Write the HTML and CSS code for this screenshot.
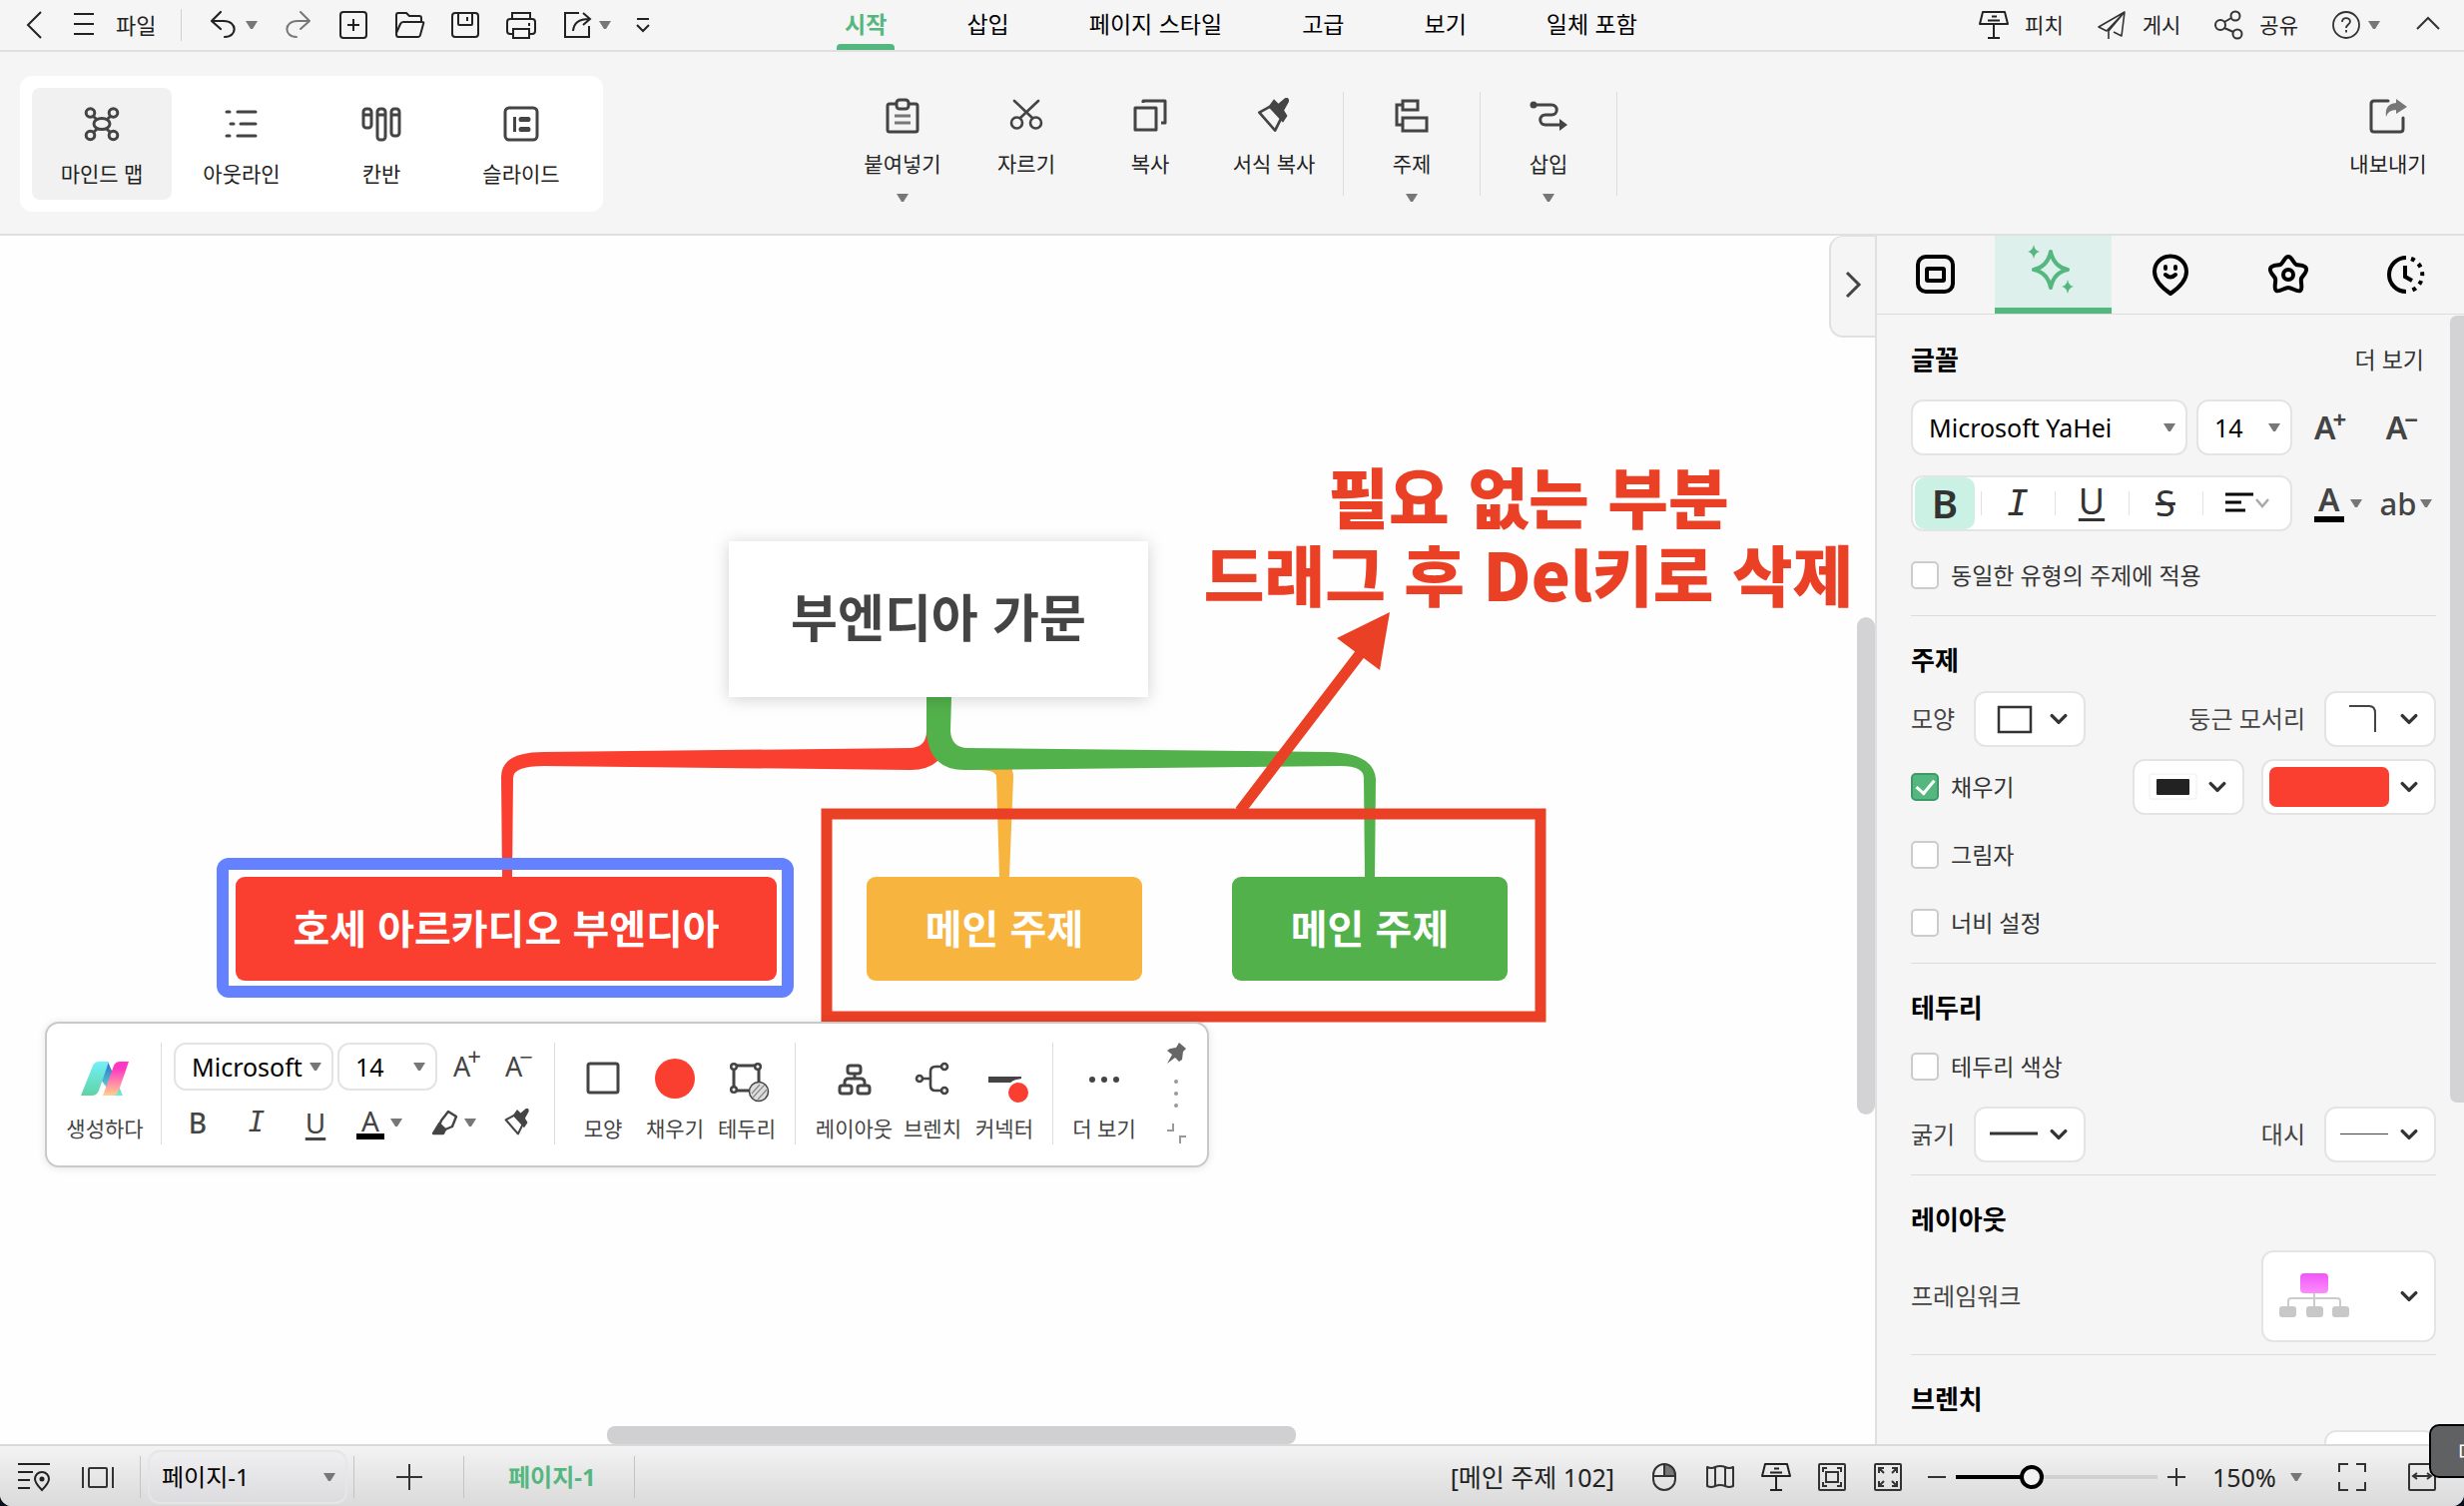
FILE: index.html
```html
<!DOCTYPE html>
<html lang="ko">
<head>
<meta charset="utf-8">
<title>부엔디아 가문</title>
<link rel="stylesheet" href="styles.css">
</head>
<body>
<svg class="defs" aria-hidden="true">
  <symbol id="caret" viewBox="0 0 12 8"><path d="M0 0h12L7 8H5z" fill="#777"/></symbol>
  <symbol id="chev" viewBox="0 0 16 10"><path d="M2 2l6 6 6-6" fill="none" stroke="#333" stroke-width="3" stroke-linecap="round" stroke-linejoin="round"/></symbol>
  <symbol id="brush" viewBox="0 0 32 32"><path d="M3 13l11-6 9 10-6 12z" fill="none" stroke="#444" stroke-width="2.4" stroke-linejoin="round"/><path d="M11 8l5-7 4 4 6-5c3-1 4 2 3 4l-4 7 3 5-4 6z" fill="#444"/></symbol>
  <symbol id="podium" viewBox="0 0 32 32"><path d="M5 3h22l3 12H2zM16 15v14M10 29h12M14 7.500h5M10 11.500h12" fill="none" stroke="#222" stroke-width="2" stroke-linejoin="round"/></symbol>
</svg>

<div class="app">
  <header class="topbar">
    <div class="quick">
      <button class="ico" aria-label="뒤로"><svg width="32" height="32" fill="none" stroke="#222" stroke-width="2"><path d="M23 3L10 16l13 13"/></svg></button>
      <button class="file"><svg width="32" height="32" fill="none" stroke="#222" stroke-width="2"><path d="M6 5h20M6 15h20M6 25h20"/></svg><span>파일</span></button>
      <i class="rule"></i>
      <div class="quick-tools">
        <button class="drop undo" aria-label="실행 취소"><svg width="32" height="32" fill="none" stroke="#222" stroke-width="2.200" stroke-linecap="round" stroke-linejoin="round"><path d="M14 3l-9 9 9 8M5 12h12c14 0 14 16 1 16"/></svg><svg class="caret"><use href="#caret"/></svg></button>
        <button class="ico" aria-label="다시 실행"><svg width="32" height="32" fill="none" stroke="#777" stroke-width="2" stroke-linecap="round" stroke-linejoin="round"><path d="M19 3l9 9-9 8M28 12H16c-14 0-14 16-1 16"/></svg></button>
        <button class="ico" aria-label="새로 만들기"><svg width="32" height="32" fill="none" stroke="#222" stroke-width="2"><rect x="3" y="3" width="26" height="26" rx="3"/><path d="M16 10v12M10 16h12"/></svg></button>
        <button class="ico" aria-label="열기"><svg width="32" height="32" fill="none" stroke="#222" stroke-width="2" stroke-linejoin="round"><path d="M3 24V6q0-2 2-2h8l3 3h10q2 0 2 2v4M3 24l4-9q1-2 3-2h19q2 0 1 2l-3 11q-.5 2-2 2H5q-2 0-2-3z"/></svg></button>
        <button class="ico" aria-label="저장"><svg width="32" height="32" fill="none" stroke="#222" stroke-width="2"><rect x="3" y="4" width="26" height="24" rx="3"/><path d="M9 4v11q0 1 1 1h12q1 0 1-1V4M18 8v4"/></svg></button>
        <button class="ico" aria-label="인쇄"><svg width="32" height="32" fill="none" stroke="#222" stroke-width="2"><path d="M7 10V4h18v6M7 25H5q-3 0-3-3v-9q0-3 3-3h22q3 0 3 3v9q0 3-3 3h-2M8 20h16v9H8zM24 14v3"/></svg></button>
        <button class="drop" aria-label="내보내기"><svg width="32" height="32" fill="none" stroke="#222" stroke-width="2"><path d="M18 4H4v24h24V17M12 22q1-12 16-12M22 4l7 6-7 6"/></svg><svg class="caret"><use href="#caret"/></svg></button>
        <button class="ico narrow" aria-label="사용자 지정"><svg width="16" height="20" fill="none" stroke="#222" stroke-width="2"><path d="M2 4h12M2 10l6 6 6-6"/></svg></button>
      </div>
    </div>
    <nav class="tabs">
      <a class="on" href="#home">시작</a><a href="#insert">삽입</a><a href="#style">페이지 스타일</a><a href="#adv">고급</a><a href="#view">보기</a><a href="#all">일체 포함</a>
    </nav>
    <div class="share">
      <button class="pair"><svg width="32" height="32"><use href="#podium"/></svg>피치</button>
      <button class="pair"><svg width="32" height="32" fill="none" stroke="#333" stroke-width="1.600" stroke-linejoin="round"><path d="M29 3L3 18l8 4zM29 3l-3 24-8-4M29 3L13 22v8"/></svg>게시</button>
      <button class="pair"><svg width="32" height="32" fill="none" stroke="#333" stroke-width="2"><circle cx="8" cy="16" r="5"/><circle cx="23" cy="7" r="4.500"/><circle cx="25" cy="25" r="4.500"/><path d="M12 13l7-4M12 19l9 4"/></svg>공유</button>
      <button class="drop" aria-label="도움말"><svg width="32" height="32" fill="none" stroke="#333" stroke-width="1.800"><circle cx="16" cy="16" r="13"/><path d="M12 13c0-5 8-5 8-.5 0 3-4 3-4 6.500M16 21v2.500"/></svg><svg class="caret"><use href="#caret"/></svg></button>
      <button class="ico" aria-label="리본 접기"><svg width="32" height="32" fill="none" stroke="#333" stroke-width="2"><path d="M5 20l11-11 11 11"/></svg></button>
    </div>
  </header>

  <section class="ribbon">
    <div class="modes">
      <button class="on"><svg width="36" height="36" fill="none" stroke="#444" stroke-width="3"><path d="M9 10l18 17M27 10L9 27"/><g fill="#f1f1f1"><circle cx="6.500" cy="7" r="4.300"/><circle cx="29.500" cy="7" r="4.300"/><circle cx="6.500" cy="29.500" r="4.300"/><circle cx="29.500" cy="29.500" r="4.300"/><ellipse cx="18" cy="18" rx="8" ry="5.500"/></g></svg>마인드 맵</button>
      <button><svg width="36" height="36" fill="none" stroke="#444" stroke-width="3" stroke-linecap="round"><path d="M3 6h3M14 6h18M7 18h3M17 18h15M3 30h3M14 30h18"/></svg>아웃라인</button>
      <button><svg width="44" height="36" fill="none" stroke="#444" stroke-width="3"><rect x="4" y="3" width="8" height="19" rx="3"/><rect x="18" y="3" width="8" height="31" rx="3"/><rect x="32" y="3" width="8" height="27" rx="3"/><path d="M4 9h8M18 9h8M32 9h8"/></svg>칸반</button>
      <button><svg width="36" height="36" fill="none" stroke="#444" stroke-width="3"><rect x="2" y="2" width="32" height="32" rx="4"/><path d="M11.500 11v15"/><path d="M17 11h9v5h-9zM17 21h9v5h-9z" fill="#444" stroke="none"/><path d="M18 13.500h7M18 23.500h7" stroke-width="5" stroke-linecap="round"/></svg>슬라이드</button>
    </div>
    <div class="tools">
      <button><svg width="36" height="36" fill="none" stroke="#444" stroke-width="3"><path d="M12 6H5q-2 0-2 2v24q0 2 2 2h26q2 0 2-2V8q0-2-2-2h-7"/><rect x="12" y="2" width="12" height="9" rx="3"/><path d="M10 18h16M10 25h16" stroke="#777"/></svg>붙여넣기<svg class="caret"><use href="#caret"/></svg></button>
      <button><svg width="36" height="36" fill="none" stroke="#444" stroke-width="2.600" stroke-linecap="round"><circle cx="8.500" cy="25" r="5.500"/><circle cx="27.500" cy="25" r="5.500"/><path d="M6 3l18 17M30 3L12 20"/></svg>자르기</button>
      <button><svg width="36" height="36" fill="none" stroke="#444" stroke-width="3" stroke-linejoin="round"><rect x="3" y="10" width="21" height="22"/><path d="M11 5V3h22v22h-4"/></svg>복사</button>
      <button><svg width="36" height="36"><use href="#brush"/></svg>서식 복사</button>
      <div class="cell"><button><svg width="36" height="36" fill="none" stroke="#444" stroke-width="3"><path d="M9 3h15v9H9zM9 20h24v13H9zM9 7H3v20h6"/></svg>주제<svg class="caret"><use href="#caret"/></svg></button></div>
      <div class="cell"><button><svg width="40" height="36" fill="none" stroke="#444" stroke-width="3"><circle cx="5" cy="7" r="3.500" fill="#444" stroke="none"/><path d="M5 7h18c7 0 7 10 0 10h-6c-7 0-7 10 0 10h14"/><path d="M31 21l8 6-8 6z" fill="#444" stroke="none"/></svg>삽입<svg class="caret"><use href="#caret"/></svg></button></div>
    </div>
    <div class="export">
      <button><svg width="40" height="36" fill="none" stroke="#444" stroke-width="3" stroke-linecap="round"><path d="M20 3H6Q3 3 3 6v25q0 3 3 3h26q3 0 3-3V20"/><path d="M28 1l11 8-11 7v-4q-8 0-10 7-2-13 10-14z" fill="#777" stroke="none"/></svg>내보내기</button>
    </div>
  </section>

  <main class="work">
    <section class="canvas">
      <svg class="links" width="1878" height="1210" viewBox="0 236 1878 1210">
        <path fill="#fa3e2f" d="M503 878L502 778Q502 753 545 753L912 749Q928 748 928 732V698H952V732Q948 771 912 771L545 767Q514 767 514 779L513 878z"/>
        <path fill="#f7b43f" d="M958 758L1004 765Q1015 765 1015 778L1011 878H1001L998 778Q998 771 980 771L960 769z"/>
        <path fill="#52b14b" d="M928 698H953L952 732Q953 748 968 749L1330 753Q1376 754 1378 780L1377 878H1367L1366 779Q1366 767 1343 767L970 771Q930 773 928 732z"/>
      </svg>
      <div class="node root">부엔디아 가문</div>
      <div class="pick"></div>
      <div class="node red">호세 아르카디오 부엔디아</div>
      <div class="node yellow">메인 주제</div>
      <div class="node green">메인 주제</div>
      <svg class="links" width="1878" height="1210" viewBox="0 236 1878 1210">
        <rect x="828" y="815" width="715" height="203" fill="none" stroke="#ea4025" stroke-width="11"/>
        <path d="M1242 812L1362 655" stroke="#ea4025" stroke-width="11"/>
        <path d="M1392 613L1339 639L1382 671z" fill="#ea4025"/>
      </svg>
      <p class="note">필요 없는 부분<br>드래그 후 Del키로 삭제</p>

      <div class="float">
        <button class="tool ai"><svg width="50" height="36"><defs><linearGradient id="g1" x1="0" y1="0" x2="0" y2="1"><stop offset="0" stop-color="#72f0fa"/><stop offset="1" stop-color="#5fd3a4"/></linearGradient><linearGradient id="g2" x1="0" y1="0" x2="0" y2="1"><stop offset=".2" stop-color="#ff36c4"/><stop offset="1" stop-color="#ffd28e"/></linearGradient><linearGradient id="g3" x1="0" y1="0" x2="0" y2="1"><stop offset="0" stop-color="#2c68c8"/><stop offset="1" stop-color="#6df0d8"/></linearGradient></defs><path fill="url(#g3)" d="M28 1l15 34H33L20 18z"/><path fill="url(#g1)" d="M13 5q2-4 6-4h10L19 30q-2 5-7 5H1z"/><path fill="url(#g2)" d="M34 5q2-4 6-4h9L39 30q-2 5-7 5h-9z"/></svg>생성하다</button>
        <div class="group text">
          <div class="line">
            <span class="pickbox w160"><select aria-label="글꼴"><option>Microsoft</option></select><svg class="caret"><use href="#caret"/></svg></span>
            <span class="pickbox w100"><select aria-label="크기"><option>14</option></select><svg class="caret"><use href="#caret"/></svg></span>
            <button class="grow thin">A<sup>+</sup></button><button class="grow thin">A<sup>−</sup></button>
          </div>
          <div class="line marks">
            <button class="b">B</button><button class="i">I</button><button class="u">U</button>
            <button class="drop color"><span>A</span><svg class="caret"><use href="#caret"/></svg></button>
            <button class="drop" aria-label="강조"><svg width="26" height="28" fill="none" stroke="#444" stroke-width="2.400" stroke-linejoin="round"><path d="M9 12l7-9 8 5-4 10-7 3-6-4z"/><path d="M7 15l6 6-2 4H1z" fill="#444"/></svg><svg class="caret"><use href="#caret"/></svg></button>
            <button aria-label="서식 복사"><svg width="28" height="28"><use href="#brush"/></svg></button>
          </div>
        </div>
        <div class="group">
          <button class="tool"><svg width="40" height="40" fill="none" stroke="#444" stroke-width="3"><rect x="5" y="5" width="30" height="29" rx="2"/></svg>모양</button>
          <button class="tool"><svg width="40" height="40"><circle cx="20" cy="20" r="20" fill="#fa3e2f"/></svg>채우기</button>
          <button class="tool"><svg class="bleed" width="40" height="40" fill="none" stroke="#444" stroke-width="3"><rect x="7" y="7" width="25" height="25"/><g fill="#fff" stroke-width="2.500"><circle cx="7" cy="8" r="2.800"/><circle cx="31" cy="8" r="2.800"/><circle cx="7" cy="31" r="2.800"/></g><circle cx="32" cy="33" r="9.500" fill="#ddd" stroke-width="1.500"/><path d="M25 35l8-9M26 39l12-13M31 41l9-10" stroke="#888" stroke-width="1.200"/></svg>테두리</button>
        </div>
        <div class="group">
          <button class="tool wide"><svg width="40" height="40" fill="none" stroke="#444" stroke-width="3"><rect x="13" y="7" width="13" height="8" rx="2.500"/><rect x="5" y="27" width="12" height="8" rx="2.500"/><rect x="23" y="27" width="12" height="8" rx="2.500"/><path d="M20 15v5M10 27v-3q0-4 4-4h12q4 0 4 4v3"/></svg>레이아웃</button>
          <button class="tool"><svg width="40" height="40" fill="none" stroke="#444" stroke-width="2.600"><path d="M10 20h8M29 8h-6q-5 0-5 5v14q0 5 5 5h6"/><g fill="#fff"><circle cx="7" cy="20" r="3"/><circle cx="32" cy="8" r="3"/><circle cx="32" cy="32" r="3"/></g></svg>브렌치</button>
          <button class="tool"><svg class="bleed" width="40" height="40"><path d="M4 18h33v2q-6 0-11 4H4z" fill="#444"/><circle cx="34" cy="34" r="13" fill="#fff"/><path d="M4 18h33v2q-6 0-11 4H4z" fill="#444"/><circle cx="34" cy="34" r="10" fill="#fa3e2f"/></svg>커넥터</button>
        </div>
        <div class="group last">
          <button class="tool"><svg width="40" height="40" fill="#444"><circle cx="8" cy="21" r="3"/><circle cx="20" cy="21" r="3"/><circle cx="32" cy="21" r="3"/></svg>더 보기</button>
        </div>
        <button class="pin" aria-label="고정"><svg width="22" height="104" fill="#666"><path d="M14 1l7 6-3 3-1 8-3 2-4-4-8 6 5-9-5-4 3-2 6-1z"/><g fill="#999"><circle cx="11" cy="40" r="2"/><circle cx="11" cy="52" r="2"/><circle cx="11" cy="64" r="2"/></g><path d="M2 89h6v-7M21 95h-6v7" fill="none" stroke="#999" stroke-width="2"/></svg></button>
      </div>

      <button class="handle" aria-label="패널 접기"><svg width="18" height="30" fill="none" stroke="#444" stroke-width="3"><path d="M3 3l12 12L3 27"/></svg></button>
      <div class="vbar"></div>
      <div class="hbar"></div>
    </section>

    <aside class="side">
      <nav class="side-tabs">
        <button aria-label="도형"><svg width="42" height="42" fill="none" stroke="#000" stroke-width="4"><rect x="3" y="3" width="35" height="35" rx="8"/><rect x="12" y="15" width="17" height="12" rx="1"/></svg></button>
        <button class="on" aria-label="스타일"><svg width="52" height="52" fill="none" stroke="#55b780" stroke-width="4" stroke-linejoin="round"><path d="M26 8q3 15 17 18-14 3-17 18-3-15-17-18 14-3 17-18z"/><path d="M9 1q1 6 6 7-5 1-6 7-1-6-6-7 5-1 6-7zM43 36q1 6 6 7-5 1-6 7-1-6-6-7 5-1 6-7z" fill="#55b780" stroke="none"/></svg></button>
        <button aria-label="아이콘"><svg width="42" height="42" fill="none" stroke="#000" stroke-width="4" stroke-linecap="round" stroke-linejoin="round"><path d="M21 40Q5 29 5 18a16 15.500 0 0 1 32 0q0 11-16 22zM16 13v2M26 13v2M16 21q5 5 10 0"/></svg></button>
        <button aria-label="테마"><svg width="42" height="42" fill="none" stroke="#000" stroke-width="4" stroke-linejoin="round"><path d="M21 3c4 0 5 7 8 8s9 0 10 4-4 7-5 10 2 10-1 12-8-3-12-3-9 5-12 3 0-9-1-12-6-6-5-10 7-3 10-4 4-8 8-8z"/><circle cx="21" cy="21" r="5"/></svg></button>
        <button aria-label="기록"><svg width="42" height="42" fill="none" stroke="#000" stroke-width="4"><path d="M22 4a17 17 0 0 0 0 34M21 12v11l7 4"/><path d="M27 5a17 17 0 0 1 0 32" stroke-dasharray="4 5"/></svg></button>
      </nav>
      <div class="props">
        <section class="first">
          <h2>글꼴 <a href="#more">더 보기</a></h2>
          <div class="fontrow">
            <span class="pickbox fam"><select aria-label="글꼴 이름"><option>Microsoft YaHei</option></select><svg class="caret"><use href="#caret"/></svg></span>
            <span class="pickbox num"><select aria-label="글꼴 크기"><option>14</option></select><svg class="caret"><use href="#caret"/></svg></span>
            <button class="grow">A<sup>+</sup></button><button class="grow">A<sup>−</sup></button>
          </div>
          <div class="fontrow">
            <div class="format">
              <button class="b on">B</button><button class="i">I</button><button class="u">U</button><button class="s">S</button>
              <button class="al" aria-label="정렬"><svg width="30" height="24" stroke="#000" stroke-width="3"><path d="M0 3h28M0 11h16M0 19h20"/></svg><svg width="14" height="10" fill="none" stroke="#aaa" stroke-width="2.500"><path d="M1 1l6 7 6-7"/></svg></button>
            </div>
            <button class="drop color heavy"><span>A</span><svg class="caret"><use href="#caret"/></svg></button>
            <button class="drop ab">ab<svg class="caret"><use href="#caret"/></svg></button>
          </div>
          <label class="check"><input type="checkbox">동일한 유형의 주제에 적용</label>
        </section>
        <section>
          <h2>주제</h2>
          <div class="row"><span>모양</span><button class="box" aria-label="모양"><svg width="52" height="32" fill="none" stroke="#333" stroke-width="2.500"><rect x="11" y="4" width="32" height="25"/></svg><svg class="chev"><use href="#chev"/></svg></button>
            <span class="push">둥근 모서리</span><button class="box" aria-label="둥근 모서리"><svg width="52" height="32" fill="none" stroke="#444" stroke-width="2"><path d="M11 3h20q6 0 6 7v19"/></svg><svg class="chev"><use href="#chev"/></svg></button></div>
          <div class="row"><label class="check"><input type="checkbox" checked>채우기</label>
            <button class="box push" aria-label="채우기 유형"><svg width="52" height="32"><rect x="3" y="3" width="47" height="25" rx="2" fill="#fff" stroke="#eee"/><rect x="10" y="8" width="33" height="16" rx="1" fill="#222"/></svg><svg class="chev"><use href="#chev"/></svg></button>
            <button class="box long" aria-label="채우기 색"><i class="swatch"></i><svg class="chev"><use href="#chev"/></svg></button></div>
          <div class="row"><label class="check"><input type="checkbox">그림자</label></div>
          <div class="row"><label class="check"><input type="checkbox">너비 설정</label></div>
        </section>
        <section>
          <h2>테두리</h2>
          <div class="row"><label class="check"><input type="checkbox">테두리 색상</label></div>
          <div class="row"><span>굵기</span><button class="box" aria-label="굵기"><svg width="52" height="32"><path d="M2 15h48" stroke="#333" stroke-width="3"/></svg><svg class="chev"><use href="#chev"/></svg></button>
            <span class="push">대시</span><button class="box" aria-label="대시"><svg width="52" height="32"><path d="M2 15.500h48" stroke="#444" stroke-width="1"/></svg><svg class="chev"><use href="#chev"/></svg></button></div>
        </section>
        <section>
          <h2>레이아웃</h2>
          <div class="row tall"><span>프레임워크</span><button class="box long push" aria-label="프레임워크"><svg width="74" height="50"><defs><linearGradient id="pk" x1="0" y1="0" x2="0" y2="1"><stop offset="0" stop-color="#f055f8"/><stop offset="1" stop-color="#fb8dfb"/></linearGradient></defs><path d="M37 22v14M11 36v-6q0-3 3-3h46q3 0 3 3v6" fill="none" stroke="#ccc" stroke-width="2"/><rect x="23" y="2" width="28" height="20" rx="4" fill="url(#pk)"/><g fill="#c8c8c8"><rect x="2" y="35" width="17" height="11" rx="3"/><rect x="29" y="35" width="17" height="11" rx="3"/><rect x="55" y="35" width="17" height="11" rx="3"/></g></svg><svg class="chev"><use href="#chev"/></svg></button></div>
        </section>
        <section>
          <h2>브렌치</h2>
          <div class="row"><button class="box push" aria-label="브렌치 스타일"></button></div>
        </section>
      </div>
      <div class="sbar"></div>
    </aside>
  </main>

  <footer class="status">
    <button class="ico" aria-label="개요"><svg width="32" height="32" fill="none" stroke="#222" stroke-width="2"><path d="M0 3h32M0 11h15M0 19h12M0 27h12"/><path d="M24 29q-7-7-7-11a7 7 0 0 1 14 0q0 4-7 11z"/><circle cx="24" cy="18" r="1.500" fill="#222"/></svg></button>
    <button class="ico gap" aria-label="프레임"><svg width="32" height="32" fill="none" stroke="#333" stroke-width="2"><rect x="7" y="7" width="18" height="19" rx="1"/><path d="M1 6v21M31 6v21"/></svg></button>
    <i class="rule r1"></i>
    <span class="pickbox page"><select aria-label="페이지"><option>페이지-1</option></select><svg class="caret"><use href="#caret"/></svg></span>
    <i class="rule"></i>
    <button class="add" aria-label="페이지 추가"><svg width="28" height="28" stroke="#333" stroke-width="2"><path d="M14 1v26M1 14h26"/></svg></button>
    <i class="rule"></i>
    <a class="current" href="#p1">페이지-1</a>
    <i class="rule"></i>
    <div class="right">
      <span class="where">[메인 주제 102]</span>
      <div class="views">
        <button aria-label="마우스"><svg width="28" height="32" fill="none" stroke="#333" stroke-width="2"><path d="M14 3a11 11 0 0 1 11 11v1H14z" fill="#777" stroke="none" /><rect x="3" y="3" width="22" height="26" rx="11"/><path d="M3 15h22M14 3v12"/></svg></button>
        <button aria-label="지도"><svg width="28" height="32" fill="none" stroke="#333" stroke-width="2" stroke-linejoin="round"><path d="M1 6q4 2 8 0 5-2 10 0 4 2 8 0v19q-4 2-8 0-5-2-10 0-4 2-8 0zM9 6v19M19 6v19"/></svg></button>
        <button aria-label="발표"><svg width="32" height="32"><use href="#podium"/></svg></button>
        <button aria-label="맞춤"><svg width="28" height="32" fill="none" stroke="#333" stroke-width="2"><rect x="1" y="3" width="26" height="26" rx="1"/><rect x="8" y="11" width="12" height="10"/><path d="M5 11V7h4M19 7h4v4M5 21v4h4M19 25h4v-4"/></svg></button>
        <button aria-label="펼치기"><svg width="28" height="32" fill="none" stroke="#333" stroke-width="2"><rect x="1" y="3" width="26" height="26" rx="1"/><path d="M5 12V7h5M5 7l5 5M18 7h5v5M23 7l-5 5M5 20v5h5M5 25l5-5M18 25h5v-5M23 25l-5-5"/></svg></button>
      </div>
      <div class="zoom">
        <button aria-label="축소"><svg width="18" height="18" stroke="#333" stroke-width="2"><path d="M0 9h18"/></svg></button>
        <input type="range" min="0" max="100" value="36" aria-label="확대/축소">
        <button aria-label="확대"><svg width="18" height="18" stroke="#333" stroke-width="2"><path d="M9 0v18M0 9h18"/></svg></button>
      </div>
      <button class="drop pct">150%<svg class="caret"><use href="#caret"/></svg></button>
      <button class="full" aria-label="전체 화면"><svg width="28" height="28" fill="none" stroke="#333" stroke-width="2"><path d="M1 9V1h9M18 1h9v8M1 19v8h9M18 27h9v-8"/></svg></button>
      <button aria-label="너비 맞춤"><svg width="28" height="28" fill="none" stroke="#333" stroke-width="2"><rect x="1" y="1" width="26" height="26" rx="1"/><path d="M5 13h18M9 10l-4 3 4 3M19 10l4 3-4 3"/></svg></button>
    </div>
  </footer>
  <div class="tip">다</div>
</div>
</body>
</html>
```
FILE: styles.css
```css
* { box-sizing: border-box; }
body {
  margin: 0;
  background: #0a0f1c;
  color: #222;
  font: 21px/28px "Noto Sans", "Noto Sans CJK KR", sans-serif;
}
button, select, input { font: inherit; color: inherit; margin: 0; }
button { padding: 0; border: 0; background: none; display: flex; align-items: center; justify-content: center; white-space: nowrap; }
a { color: inherit; text-decoration: none; }
svg { display: block; flex: none; }
.defs { position: absolute; width: 0; height: 0; }
.caret { width: 12px; height: 8px; }
.chev { width: 18px; height: 12px; }
.rule { flex: none; width: 1px; background: #d0d0d0; }

.app { position: relative; height: 100vh; display: flex; flex-direction: column; overflow: hidden; background: #f5f5f5; border-radius: 0 0 12px 12px; }

/* top bar */
.topbar { flex: none; height: 52px; display: grid; grid-template-columns: 1fr auto 1fr; padding-left: 18px; border-bottom: 2px solid #e0e0e0; }
.quick, .quick-tools, .share, .tabs { display: flex; align-items: center; }
.topbar { padding-bottom: 1px; }
.quick { gap: 18px; }
.quick .rule { height: 32px; margin: 0 7px; }
.quick-tools { gap: 24px; }
.file { gap: 16px; font-size: 22px; }
.drop { gap: 6px; }
.undo { gap: 7px; }
.tabs { font-family: "Noto Sans CJK KR", sans-serif; font-size: 23px; color: #000; }
.tabs a { position: relative; height: 49px; padding: 9px 40px; }
.tabs .on { color: #55b780; font-weight: 700; }
.tabs .on::after { content: ""; position: absolute; left: 32px; right: 32px; bottom: -1px; height: 6px; border-radius: 4px 4px 0 0; background: #55b780; }
.share { justify-content: flex-end; gap: 32px; padding-right: 20px; }
.pair { gap: 15px; }

/* ribbon */
.ribbon { flex: none; height: 184px; display: grid; grid-template-columns: 1fr auto 1fr; padding: 24px 26px 0 20px; border-bottom: 2px solid #e0e0e0; }
.ribbon button { flex-direction: column; justify-content: flex-start; }
.modes { justify-self: start; height: 136px; display: flex; padding: 12px; border-radius: 12px; background: #fff; }
.modes button { width: 140px; height: 112px; padding-top: 18px; gap: 18px; border-radius: 8px; }
.modes .on { background: #f1f1f1; }
.tools { display: flex; }
.tools button { width: 124px; padding-top: 22px; gap: 16px; }
.tools .cell { height: 104px; margin-top: 16px; padding: 0 6px; border-right: 1px solid #dcdcdc; }
.tools .cell:nth-child(5) { margin-left: 7px; border-left: 1px solid #dcdcdc; }
.tools .cell button { padding-top: 6px; }
.export { display: flex; justify-content: flex-end; }
.export button { width: 100px; padding-top: 22px; gap: 16px; }

/* workspace */
.work { flex: 1; min-height: 0; display: flex; }
.canvas { position: relative; flex: 1; min-width: 0; overflow: hidden; background: #fefefe; }
.links { position: absolute; left: 0; top: 0; }
.node { position: absolute; display: flex; align-items: center; justify-content: center; font-family: "Noto Sans CJK KR", sans-serif; font-weight: 700; white-space: nowrap; }
.node.red, .node.yellow, .node.green { top: 642px; height: 104px; border-radius: 9px; color: #fff; font-size: 40px; line-height: 56px; padding-bottom: 4px; }
.node.red { left: 236px; width: 542px; background: #fa3e2f; }
.node.yellow { left: 868px; width: 276px; background: #f7b43f; }
.node.green { left: 1234px; width: 276px; background: #52b14b; }
.node.root { left: 730px; top: 306px; width: 420px; height: 156px; padding-bottom: 8px; background: #fff; color: #444; font-size: 51px; line-height: 64px; box-shadow: 0 2px 16px rgba(0, 0, 0, .18); }
.pick { position: absolute; left: 217px; top: 623px; width: 578px; height: 140px; border: 12px solid #6481ff; border-radius: 12px; }
.note { position: absolute; left: 1181px; top: 220px; width: 700px; margin: 0; color: #ea4025; font-family: "Noto Sans CJK KR", sans-serif; font-size: 66px; line-height: 78px; font-weight: 900; text-align: center; white-space: nowrap; }
.vbar { position: absolute; right: 0; top: 382px; width: 18px; height: 498px; border-radius: 9px; background: #d3d3d6; }
.hbar { position: absolute; left: 608px; bottom: 0; width: 690px; height: 18px; border-radius: 8px; background: #d0d0d2; }
.handle { position: absolute; right: 0; top: 0; width: 46px; height: 102px; border: 2px solid #e0e0e0; border-width: 1px 0 2px 2px; border-radius: 14px 0 0 14px; background: #f5f5f5; padding-bottom: 4px; }

/* floating toolbar */
.float { position: absolute; left: 45px; top: 787px; width: 1166px; height: 146px; display: flex; padding: 19px 20px 21px 10px; border: 2px solid #c9c9c9; border-radius: 14px; background: #fff; color: #444; box-shadow: 0 1px 8px rgba(0, 0, 0, .1); }
.group { display: flex; padding: 0 12px; border-left: 1px solid #dcdcdc; }
.group.last { padding: 0 15px; }
.tool { flex-direction: column; justify-content: flex-start; width: 72px; padding-top: 16px; gap: 16px; }
.tool.wide { width: 89px; padding-left: 4px; }
.tool.ai { width: 106px; padding: 18px 8px 0 0; gap: 18px; }
.bleed { overflow: visible; }
.group.text { flex-direction: column; gap: 14px; width: 394px; }
.line { display: flex; align-items: center; }
.line > * { flex: none; }
.pickbox { position: relative; display: flex; height: 56px; border: 2px solid #e4e4e4; border-radius: 12px; background: #fff; color: #000; }
.pickbox select { appearance: none; width: 100%; padding: 0 16px; border: 0; background: none; font-size: 25px; line-height: 32px; }
.pickbox .caret { position: absolute; right: 10px; top: 50%; margin-top: -4px; pointer-events: none; }
.line .pickbox { height: 48px; margin-right: 4px; }
.line .pickbox select { padding-right: 0; }
.w160 { width: 160px; }
.w100 { width: 100px; }
.grow { width: 32px; font-size: 32px; line-height: 32px; font-weight: 600; color: #444; }
.grow sup { align-self: flex-start; margin: -4px 0 0 -3px; font-size: 24px; line-height: 24px; font-weight: 700; }
.grow.thin { width: 52px; font-size: 27px; font-weight: 400; }
.grow.thin sup { margin-top: -6px; font-weight: 400; }
.marks { font-size: 28px; line-height: 36px; padding-left: 11px; }
.marks > * { width: 26px; margin-right: 33px; height: 36px; }
.marks .drop { width: 48px; }
.marks .color { margin-left: -6px; margin-right: 27px; }
.marks > :nth-child(5) { margin-right: 26px; }
.marks > :last-child { margin-right: 0; }
.b { font-weight: 500; }
.i { font-family: "DejaVu Sans Mono", monospace; font-style: italic; }
.u { text-decoration: underline; text-decoration-thickness: 3px; text-underline-offset: 4px; }
.s { text-decoration: line-through; text-decoration-thickness: 3px; }
.color span { display: block; height: 34px; padding: 0 5px; line-height: 30px; border-bottom: 6px solid #000; }
.pin { margin-left: 10px; }

/* side panel */
.side { position: relative; flex: none; width: 590px; display: flex; flex-direction: column; border-left: 2px solid #e0e0e0; background: #f5f5f5; overflow: hidden; }
.side-tabs { flex: none; display: flex; height: 79px; border-bottom: 1px solid #dcdcdc; }
.side-tabs button { width: 20%; }
.side-tabs .on { background: #def0eb; border-bottom: 6px solid #55b780; padding: 0 4px 4px 0; }
.props { padding: 0 28px 0 34px; }
.props section { padding: 28px 0 12px; border-bottom: 1px solid #dcdcdc; display: flex; flex-direction: column; gap: 12px; }
.props section.first { padding: 29px 0 26px; gap: 20px; }
.props h2 { display: flex; justify-content: space-between; margin: 0 12px 3px 0; font-size: 26px; line-height: 32px; font-weight: 700; color: #000; }
.props .first h2 { margin-bottom: 4px; }
.props h2 a { font-size: 23px; font-weight: 400; color: #333; }
.fontrow { display: flex; align-items: center; height: 56px; }
.fam { width: 277px; margin-right: 9px; }
.num { width: 96px; margin-right: 22px; }
.fontrow .grow { margin-right: 40px; }
.fontrow .grow:last-child { margin-right: 0; }
.format { display: flex; align-items: center; width: 382px; height: 56px; margin-right: 22px; padding: 0 2px; border: 2px solid #e4e4e4; border-radius: 12px; background: #fff; font-size: 36px; line-height: 40px; color: #333; }
.format button { position: relative; width: 74px; height: 52px; }
.format .u { padding-bottom: 4px; }
.format button + button::before { content: ""; position: absolute; left: 0; top: 14px; width: 1px; height: 24px; background: #e2e2e2; }
.format .b { width: 60px; margin-right: 6px; border-radius: 10px; background: #cbf0e4; font-size: 40px; font-weight: 600; }
.format .al { flex: 1; padding-left: 4px; }
.color.heavy { font-size: 32px; font-weight: 600; color: #444; }
.color.heavy span { padding: 0 4px; height: 38px; }
.ab { margin-left: 18px; gap: 4px; font-size: 31px; font-weight: 500; color: #444; }
.check { display: flex; align-items: center; gap: 12px; height: 28px; font-size: 23px; color: #333; }
.first .check { margin-top: 10px; }
.check input { appearance: none; width: 28px; height: 28px; border: 2px solid #ccc; border-radius: 5px; background: #fff; }
.check input:checked { border-color: #3f9868; background: #55b780; display: grid; place-items: center; }
.check input:checked::after { content: ""; width: 8px; height: 15px; margin-top: -4px; border: solid #fff; border-width: 0 3px 3px 0; transform: rotate(40deg); }
.row { display: flex; align-items: center; height: 56px; gap: 19px; font-size: 24px; color: #444; }
.row.tall { height: 92px; }
.push { margin-left: auto; }
.box { width: 112px; height: 100%; padding: 0 16px 0 12px; justify-content: space-between; border: 2px solid #e4e4e4; border-radius: 12px; background: #fff; }
.box.long { width: 175px; padding-left: 6px; }
.box + .box { margin-left: -2px; }
.tall .box.long { padding-left: 14px; }
.swatch { width: 120px; height: 40px; border-radius: 7px; background: #fa3e2f; }
.sbar { position: absolute; right: 0; top: 80px; width: 14px; height: 788px; border-radius: 7px 0 0 7px; background: #d3d3d6; }

/* status bar */
.status { flex: none; height: 62px; display: flex; align-items: center; padding: 2px 28px 0 18px; border-top: 2px solid #d9d9d9; background: linear-gradient(#f3f3f3, #dadada); }
.status .rule { height: 42px; background: #c4c4c4; }
.gap { margin-left: 32px; }
.r1 { margin: 0 7px 0 26px; }
.page { width: 200px; height: 54px; margin-right: 6px; border-color: #e6e6e6; background: linear-gradient(#efeff1, #dcdcdf); }
.page select { padding-left: 12px; font-size: 24px; }
.add { width: 109px; }
.current { padding: 0 38px 0 44px; font-size: 24px; font-weight: 700; color: #55b780; }
.right { margin-left: auto; display: flex; align-items: center; }
.where { margin-right: 36px; font-size: 25px; }
.views { display: flex; gap: 28px; }
.views button { width: 28px; }
.zoom { display: flex; align-items: center; gap: 10px; margin: 0 27px 0 26px; }
.zoom input { appearance: none; width: 202px; height: 24px; background: linear-gradient(90deg, #000 38%, #d0d0d0 38%) center / 100% 4px no-repeat; }
.zoom input::-webkit-slider-thumb { appearance: none; width: 24px; height: 24px; border: 4px solid #000; border-radius: 50%; background: #f2f2f2; }
.pct { width: 90px; justify-content: space-between; font-size: 25px; }
.full { margin: 0 42px 0 36px; }
.tip { position: absolute; right: -60px; bottom: 28px; width: 95px; height: 54px; padding: 12px 0 0 27px; border: 2px solid #000; border-radius: 10px; background: #606163; color: #fff; }
```
